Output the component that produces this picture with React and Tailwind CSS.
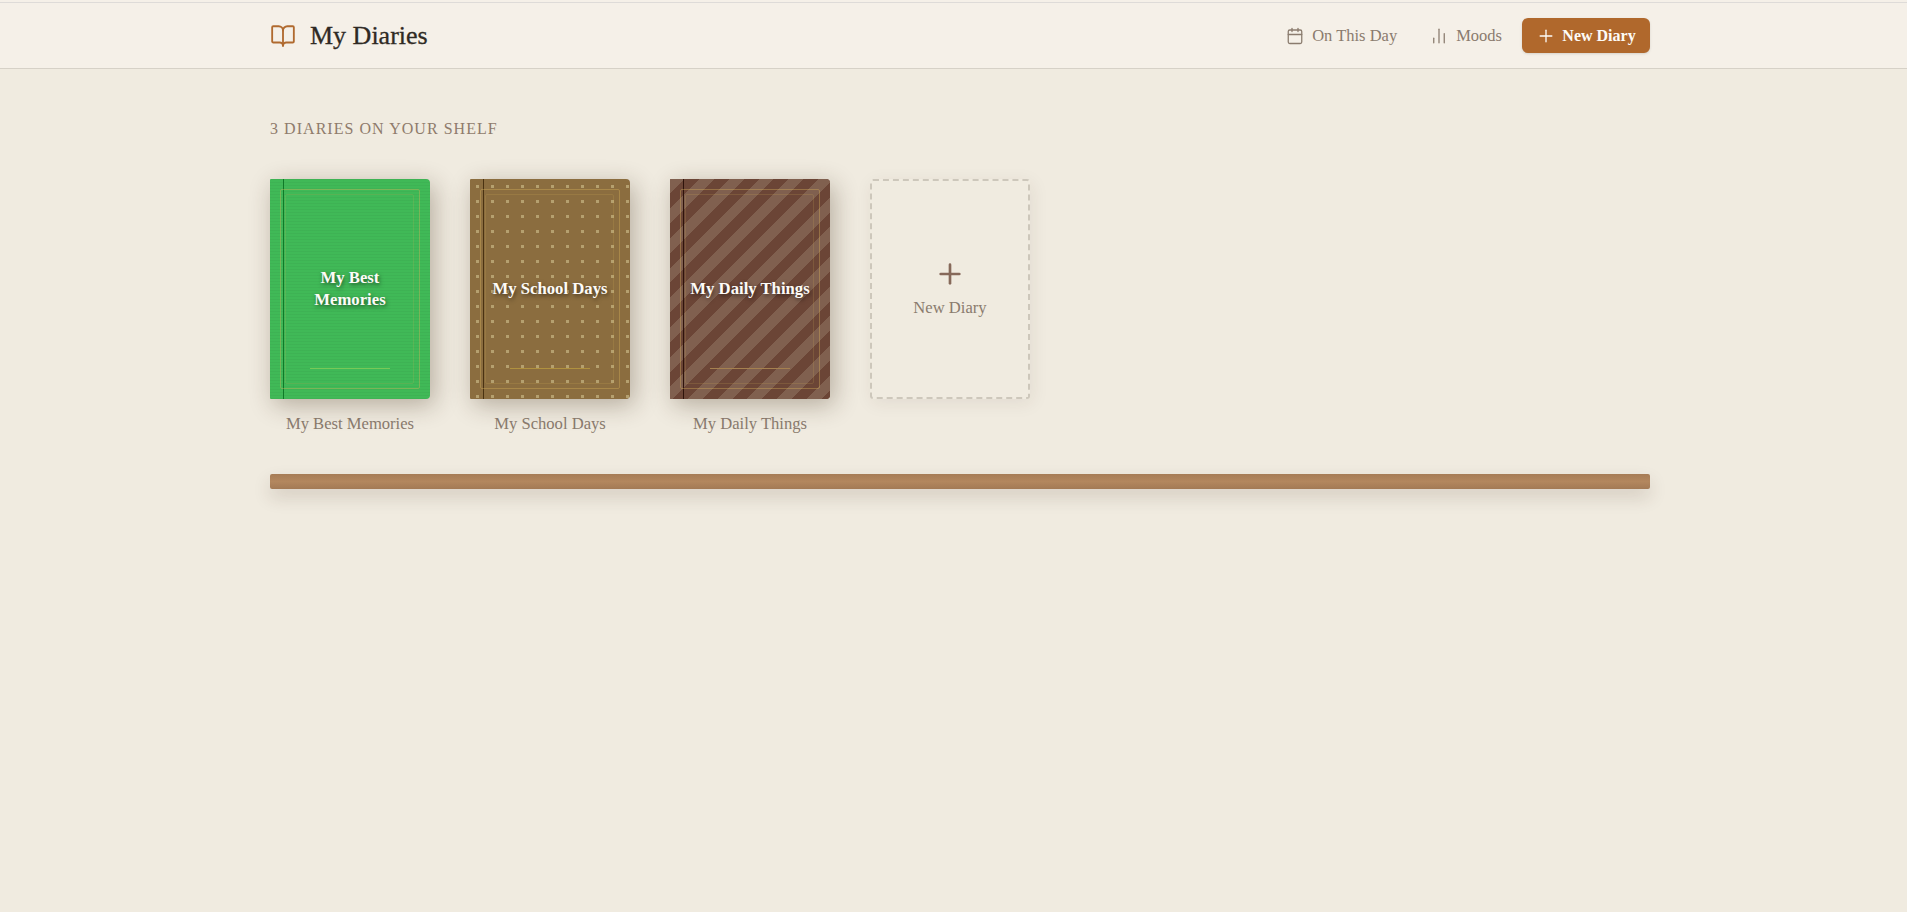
import React from 'react'
import { BookOpen, Calendar, ChartNoAxesColumn, Plus } from 'lucide-react'

const serif = "font-['Liberation_Serif',serif]"

const diaries = [
  {
    title: 'My Best Memories',
    cover: 'bg-[#40b957]',
    pattern: 'bg-[repeating-linear-gradient(0deg,rgba(0,0,0,0.035)_0px,rgba(0,0,0,0.035)_1px,transparent_1px,transparent_3px)]',
    spine: 'bg-[#0f7a28]',
    rule: 'bg-[#78c858]',
  },
  {
    title: 'My School Days',
    cover: 'bg-[#8b6d3f]',
    pattern: 'bg-[radial-gradient(circle,#b5a06f_1.5px,transparent_1.6px)] bg-[length:15px_15px]',
    spine: 'bg-[#4a3211]',
    rule: 'bg-[#b0913f]',
  },
  {
    title: 'My Daily Things',
    cover: 'bg-[#6b4536]',
    pattern: 'bg-[repeating-linear-gradient(135deg,#80604f_0px,#80604f_10.5px,#6b4536_10.5px,#6b4536_21px)]',
    spine: 'bg-[#2e130b]',
    rule: 'bg-[#a5804f]',
  },
]

const DiaryBook = ({ diary }) => (
  <div className={`relative w-[160px] h-[220px] rounded-[1px_4px_4px_1px] overflow-hidden flex items-center justify-center shadow-[4px_6px_24px_rgba(60,40,20,0.32)] ${diary.cover}`}>
    <div className={`absolute inset-0 ${diary.pattern}`} />
    <div className={`absolute left-[13px] top-0 bottom-0 w-px ${diary.spine}`} />
    <div className="absolute left-[10px] right-[10px] top-[10px] bottom-[10px] border rounded-[2px] border-[rgba(212,175,90,0.4)]" />
    <div className="absolute left-[15px] right-[16px] top-[15px] bottom-[15px] border rounded-[2px] border-[rgba(212,175,90,0.18)]" />
    <div className={`absolute left-[40px] w-[80px] bottom-[30px] h-px ${diary.rule}`} />
    <span className={`relative w-[130px] text-center text-[#fdfbf7] text-[16.7px] leading-[22px] font-bold [text-shadow:1px_2px_4px_rgba(0,0,0,0.55)] ${serif}`}>
      {diary.title}
    </span>
  </div>
)

const App = () => {
  return (
    <div className={`min-h-[912px] bg-[#f0ebe0] ${serif}`}>
      <header className="h-[69px] bg-[#f5f0e8] border-b border-b-[#d6d1c7] flex">
        <div className="mt-[2px] flex-1 border-t border-t-[#dedbd8] flex">
          <div className="ml-[270px] w-[1380px] flex items-center justify-between">
            <div className="flex items-center">
              <BookOpen className="w-[26px] h-[26px] text-[#b06a2f]" strokeWidth={1.7} />
              <h1 className="ml-[14px] text-[26px] font-normal text-[#2f2a24] [-webkit-text-stroke:0.3px_#2f2a24]">My Diaries</h1>
            </div>
            <div className="flex items-center text-[#8a7b6e] text-[16.5px]">
              <div className="flex items-center gap-2">
                <Calendar className="w-[18px] h-[18px]" strokeWidth={1.7} />
                <span className="pt-px">On This Day</span>
              </div>
              <div className="flex items-center gap-2 ml-[33px]">
                <ChartNoAxesColumn className="w-[18px] h-[18px]" strokeWidth={1.7} />
                <span className="pt-px">Moods</span>
              </div>
              <button className="ml-5 w-[128px] h-[35px] bg-[#b0682c] text-[#fdfbf7] rounded-md flex items-center justify-center gap-1.5 shadow-sm font-bold text-[16px]">
                <Plus className="w-5 h-5" strokeWidth={1.6} />
                New Diary
              </button>
            </div>
          </div>
        </div>
      </header>

      <main className="ml-[270px] w-[1380px] pt-[50px]">
        <h2 className="text-[16px] leading-5 tracking-[1.04px] uppercase text-[#8f7b6c] font-normal">3 Diaries on your shelf</h2>
        <div className="flex gap-10 mt-[40px]">
          {diaries.map((d) => (
            <div key={d.title} className="w-[160px] flex flex-col items-center">
              <DiaryBook diary={d} />
              <span className="mt-[15px] text-[#8a7b6e] text-[16.6px] leading-5">{d.title}</span>
            </div>
          ))}
          <div className="w-[160px] h-[220px] border-2 border-dashed border-[#cdc7bb] rounded-[3px] flex flex-col items-center justify-center text-[#8a7b6e] shadow-[2px_4px_18px_rgba(60,40,20,0.08)]">
            <Plus className="w-8 h-8 text-[#86695a] -mt-[2px]" strokeWidth={2} />
            <span className="mt-[8px] text-[16.6px] leading-5">New Diary</span>
          </div>
        </div>
        <div className="mt-[40px] h-[15px] rounded-[2px] bg-[linear-gradient(180deg,#a67c56_0%,#b3875e_50%,#a37a55_100%)] shadow-[0_8px_18px_rgba(60,40,20,0.16)]" />
      </main>
    </div>
  )
}

export default App
